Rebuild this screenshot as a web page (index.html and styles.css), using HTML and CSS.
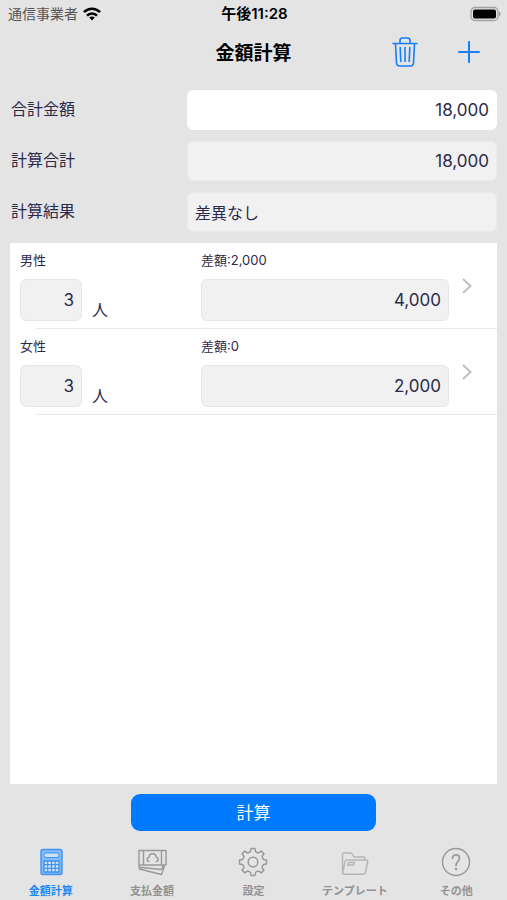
FILE: index.html
```html
<!DOCTYPE html>
<html lang="ja">
<head>
<meta charset="utf-8">
<meta name="viewport" content="width=device-width, initial-scale=1">
<title>金額計算</title>
<link rel="stylesheet" href="styles.css">
</head>
<body>
<div class="app">
  <div class="status">
    <div class="carrier"><span>通信事業者</span>
      <svg width="18" height="14" viewBox="0 0 18 14" fill="none" stroke="#000" stroke-width="2.6" aria-hidden="true"><path d="M1 5.2C5.400 .6 12.600 .6 17 5.200M4 8.600C6.800 5.700 11.200 5.700 14 8.600"/><path d="M6.200 10.500C7.800 9 10.200 9 11.800 10.500L9 13.400Z" fill="#000" stroke="none"/></svg>
    </div>
    <div class="time">午後11:28</div>
    <svg class="battery" width="31" height="16" viewBox="0 0 31 16" aria-hidden="true"><rect x="1" y="1.500" width="27" height="13" rx="4" fill="#e4e4e4" stroke="#a3a3a3" stroke-width="1.300"/><rect x="3" y="3.500" width="23" height="9" rx="2" fill="#000"/><path d="M29 5.500c2 .8 2 4.200 0 5z" fill="#999"/></svg>
  </div>
  <header class="nav">
    <h1>金額計算</h1>
    <div class="actions">
      <button type="button" class="icon-btn" aria-label="削除"><svg width="26" height="32" viewBox="0 0 26 32" fill="none" stroke="#147efb" stroke-width="1.600" stroke-linecap="round" stroke-linejoin="round"><path d="M1 7.500H25M8 7V4.500Q8 2 10.500 2H15.500Q18 2 18 4.500V7M3.500 8L4.500 27Q4.800 30 7.500 30H18.500Q21.200 30 21.500 27L22.500 8M8.200 11.500L8.800 25.500M13 11.500V25.500M17.800 11.500L17.200 25.500"/></svg></button>
      <button type="button" class="icon-btn" aria-label="追加"><svg width="22" height="22" viewBox="0 0 22 22" fill="none" stroke="#147efb" stroke-width="2" stroke-linecap="round"><path d="M11 1V21M1 11H21"/></svg></button>
    </div>
  </header>
  <main>
    <form class="summary">
      <label for="total">合計金額</label><input id="total" class="field editable num" value="18,000">
      <label for="calc">計算合計</label><input id="calc" class="field num" value="18,000" readonly>
      <label for="result">計算結果</label><input id="result" class="field" value="差異なし" readonly>
    </form>
    <ul class="list">
      <li class="row">
        <label class="name" for="n1">男性</label><label class="diff" for="a1">差額:2,000</label>
        <input id="n1" class="field num count" value="3" readonly><span class="unit">人</span>
        <input id="a1" class="field num amount" value="4,000" readonly>
        <button type="button" class="more" aria-label="男性の詳細"><svg width="10" height="16" viewBox="0 0 10 16" fill="none" stroke="#bfbfc1" stroke-width="2"><path d="M1 1L8.500 8L1 15"/></svg></button>
      </li>
      <li class="row">
        <label class="name" for="n2">女性</label><label class="diff" for="a2">差額:0</label>
        <input id="n2" class="field num count" value="3" readonly><span class="unit">人</span>
        <input id="a2" class="field num amount" value="2,000" readonly>
        <button type="button" class="more" aria-label="女性の詳細"><svg width="10" height="16" viewBox="0 0 10 16" fill="none" stroke="#bfbfc1" stroke-width="2"><path d="M1 1L8.500 8L1 15"/></svg></button>
      </li>
    </ul>
    <button type="button" class="primary">計算</button>
  </main>
  <nav class="tabs">
    <a href="#calc" class="tab active" aria-current="page">
      <svg width="32" height="32" viewBox="0 0 32 32" fill="none" stroke="#4093f1" stroke-width="1.400"><rect x="6" y="3.500" width="21" height="25" rx="2" fill="#82bafa"/><rect x="9" y="7" width="15" height="4.500" rx="2" fill="#cfe1f5" stroke-width="1"/><path d="M9 15H24V26H9Z" fill="#d3e4f7"/><path d="M9 18.700H24M9 22.400H24M12.700 15V26M16.500 15V26M20.200 15V26" stroke-width="1.200"/></svg>
      <span>金額計算</span></a>
    <a href="#pay" class="tab">
      <svg width="32" height="32" viewBox="0 0 32 32" fill="none" stroke="#999" stroke-width="1.400" stroke-linejoin="round"><path d="M3 4.500H30V19H3ZM7.500 4.500V19M25.500 4.500V19M13.500 15.500C10.500 15.700 10.300 11.500 13 11.300C13.200 6.500 20 6.500 20.300 11.300C23 11.500 22.800 15.700 19.800 15.500M3 19V21.200L25.500 23.500L27.500 19M3.500 21.500V23L25.500 28.500L28.500 20"/></svg>
      <span>支払金額</span></a>
    <a href="#settings" class="tab">
      <svg width="32" height="32" viewBox="0 0 32 32" fill="none" stroke="#999" stroke-width="1.500" stroke-linejoin="round"><path d="M13.500 5.500L14 2.500H18L18.500 5.500Q20 6.800 21.700 6.900L24.200 5.100L26.900 7.800L25.100 10.300Q25.200 12 26.500 13.500L29.500 14V18L26.500 18.500Q25.200 20 25.100 21.700L26.900 24.200L24.200 26.900L21.700 25.100Q20 25.200 18.500 26.500L18 29.500H14L13.500 26.500Q12 25.200 10.300 25.100L7.800 26.900L5.100 24.200L6.900 21.700Q6.800 20 5.500 18.500L2.500 18V14L5.500 13.500Q6.800 12 6.900 10.300L5.100 7.800L7.800 5.100L10.300 6.900Q12 6.800 13.500 5.500Z"/><circle cx="16" cy="16" r="4.800"/></svg>
      <span>設定</span></a>
    <a href="#templates" class="tab">
      <svg width="32" height="32" viewBox="0 0 32 32" fill="none" stroke="#b5b5b5" stroke-width="1.400" stroke-linejoin="round"><path d="M3.500 28V8.500Q3.500 7 5 7H11.500Q12.500 7 13.500 8.500L15 11H24.500Q26 11 26 12.500V14M3.500 28L6 15.500Q6.500 14 8 14H27.500Q29 14 28.700 15.500L26.500 26.500Q26.200 28.200 25 28.200H5Q3.500 28.200 3.500 27M8.500 19L9.500 16.500H15.500L14.500 19Z"/></svg>
      <span>テンプレート</span></a>
    <a href="#other" class="tab">
      <svg width="32" height="32" viewBox="0 0 32 32" fill="none" stroke="#999" stroke-width="1.400" stroke-linecap="round"><circle cx="16" cy="16" r="13.500"/><path d="M12.500 12.500C12.500 7.500 19.500 7.700 19.500 12.300C19.500 15.500 16 15.400 16 19.500" stroke-width="1.700"/><circle cx="16" cy="23" r=".6" fill="#999"/></svg>
      <span>その他</span></a>
  </nav>
</div>
</body>
</html>
```
FILE: styles.css
```css
* { box-sizing: border-box; }
body {
  margin: 0;
  background: #e4e4e4;
  color: #2c2a4a;
  font-family: Inter, "Noto Sans CJK JP", sans-serif;
}
button, input { font: inherit; color: inherit; }
button { padding: 0; border: 0; background: none; }
svg { display: block; }
.app { min-height: 100vh; display: flex; flex-direction: column; }
.status {
  display: grid;
  grid-template-columns: 1fr auto 1fr;
  align-items: center;
  height: 28px;
  padding: 0 6px 0 8px;
  font-size: 14px;
  line-height: 20px;
  color: #000;
}
.carrier { display: flex; align-items: center; gap: 5px; color: #555; }
.time { font-size: 15px; font-weight: 600; }
.battery { justify-self: end; }
.nav {
  display: grid;
  grid-template-columns: 1fr auto 1fr;
  align-items: center;
  height: 48px;
  padding: 0 24px;
}
h1 {
  grid-column: 2;
  margin: 0;
  padding-top: 4px;
  font-size: 19px;
  line-height: 28px;
  font-weight: 700;
  color: #000;
}
.actions { display: flex; align-items: center; justify-content: flex-end; gap: 36px; }
.icon-btn { display: grid; place-items: center; min-width: 28px; }
main { flex: 1; display: flex; flex-direction: column; padding: 14px 10px 0; }
.summary {
  display: grid;
  grid-template-columns: 4fr 7fr;
  row-gap: 11px;
  align-items: center;
  font-size: 16px;
  line-height: 22px;
}
.summary label { padding-left: 1px; padding-bottom: 2px; }
.field {
  width: 100%;
  min-width: 0;
  height: 40px;
  padding: 0 7px;
  border: 1px solid #ebebeb;
  border-radius: 6px;
  background: #f1f1f1;
  font-size: 16px;
  outline: 0;
}
.editable { background: #fff; border-color: #fff; }
.num { text-align: right; font-size: 17px; }
.list {
  flex: 1;
  margin: 11px 0 0;
  padding: 0;
  list-style: none;
  background: #fff;
}
.row {
  position: relative;
  display: grid;
  grid-template-columns: 62px 1fr 248px 48px;
  grid-template-rows: 36px 42px;
  padding-left: 10px;
  padding-bottom: 8px;
}
.row::after {
  content: "";
  position: absolute;
  left: 26px;
  right: 0;
  bottom: 0;
  border-bottom: 1px solid #e9e9ea;
}
.name, .diff { align-self: center; font-size: 13px; line-height: 20px; padding-bottom: 2px; }
.name { grid-column: 1 / 3; }
.diff { grid-column: 3; }
.row .field { height: 42px; border-color: #e6e6e6; }
.unit { align-self: end; padding-left: 10px; font-size: 16px; line-height: 22px; }
.more {
  grid-column: 4;
  grid-row: 1 / 3;
  display: grid;
  place-items: center start;
  padding-left: 13px;
  padding-top: 8px;
}
.primary {
  align-self: center;
  width: 50%;
  min-width: 245px;
  height: 37px;
  margin: 10px 0 9px;
  padding-bottom: 2px;
  border-radius: 9px;
  background: #007aff;
  color: #fff;
  font-size: 17px;
}
.tabs { display: grid; grid-template-columns: repeat(5, 1fr); padding-top: 6px; }
.tab {
  display: flex;
  flex-direction: column;
  align-items: center;
  gap: 5px;
  color: #929292;
  font-size: 11px;
  font-weight: 600;
  line-height: 17px;
  text-decoration: none;
  white-space: nowrap;
}
.active { color: #2386f5; font-weight: 700; }
```
